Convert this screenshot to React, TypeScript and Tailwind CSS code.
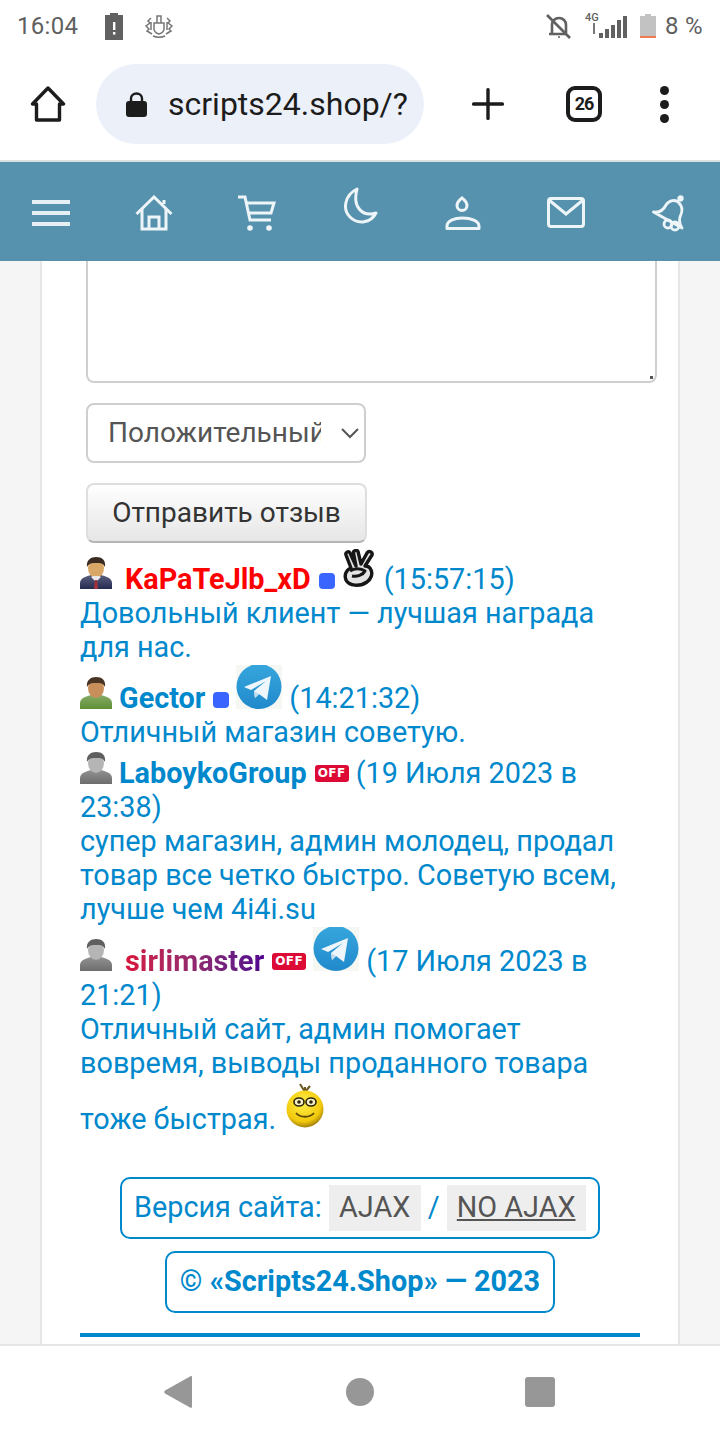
import React from "react";

const Avatar = ({ skin, hair, body, tie, id }: { skin: string; hair: string; body: string; tie?: boolean; id: string }) => (
  <svg width="32" height="32" viewBox="0 0 32 32" className="shrink-0">
    <defs>
      <linearGradient id={id} x1="0" y1="0" x2="0" y2="1">
        <stop offset="0" stopColor={body} stopOpacity="0.75" />
        <stop offset="1" stopColor={body} />
      </linearGradient>
    </defs>
    <path d="M0 32V26C0 21 7 19 11 18H21C25 19 32 21 32 26V32Z" fill={`url(#${id})`} />
    <ellipse cx="16" cy="11" rx="8" ry="10" fill={skin} />
    <path d="M7 10C6 3 11 0 16 0C22 0 26 3 25 10C23 6 21 6 16 6C12 6 9 6 7 10Z" fill={hair} />
    {tie && (
      <>
        <path d="M11 20L16 25L21 20L19 19H13Z" fill="#e8e8e8" />
        <path d="M15 23H17L18 32H14Z" fill="#a8323a" />
      </>
    )}
  </svg>
);

const Telegram = ({ cls, id }: { cls: string; id: string }) => (
  <svg width="46" height="44" viewBox="0 0 46 44" className={`shrink-0 ${cls}`}>
    <rect width="46" height="44" fill="#f4f7f2" />
    <defs>
      <linearGradient id={id} x1="0" y1="0" x2="0" y2="1">
        <stop offset="0" stopColor="#37a6dc" />
        <stop offset="1" stopColor="#2089cc" />
      </linearGradient>
    </defs>
    <circle cx="23" cy="21.5" r="22.5" fill={`url(#${id})`} />
    <path d="M8 22L35 11L31 35L23 29L19 33L18 26L30 16L15 25Z" fill="#eef6fb" />
    <path d="M18 26L19 33L23 29Z" fill="#c4dcec" />
  </svg>
);

const Dot = () => <span className="w-4 h-4 rounded-[4px] bg-[#3a66ff] shrink-0 ml-2 mt-[4px]" />;

const Off = () => (
  <span className="w-[34px] h-[17px] rounded-[3px] bg-[#dd0a35] text-white text-[12px] leading-[17px] font-bold text-center tracking-[0.5px] shrink-0 ml-2 mt-[1px] font-['DejaVu_Sans',sans-serif]">
    OFF
  </span>
);

const Row = ({ children }: { children: React.ReactNode }) => (
  <div className="flex items-center h-[34px] whitespace-nowrap">{children}</div>
);

const Line = ({ children }: { children: React.ReactNode }) => (
  <div className="h-[34px] whitespace-nowrap">{children}</div>
);

export default function App() {
  return (
    <div className="w-[720px] h-[1440px] overflow-hidden flex flex-col bg-white font-['Roboto',sans-serif] text-[28.8px] leading-[34px] text-[#0088cc]">
      {/* status bar */}
      <div className="h-[52px] shrink-0 flex items-center pl-[17px] pr-[17px] text-[#5f5f5f]">
        <span className="text-[24px] leading-[28px] w-[60px] tracking-[0.3px]">16:04</span>
        <svg width="18" height="27" viewBox="0 0 18 27" className="ml-[28px]">
          <path d="M5 0H13V2H18V27H0V2H5Z" fill="#616161" />
          <rect x="8" y="9" width="2.4" height="8" fill="#fff" />
          <rect x="8" y="19" width="2.4" height="2.6" fill="#fff" />
        </svg>
        <svg width="28" height="24" viewBox="0 0 28 24" className="ml-[22px]" fill="none" stroke="#777" strokeWidth="1.5">
          <path d="M9 9H19V15C19 18 17 19 14 20C11 19 9 18 9 15Z" />
          <path d="M12 9V2H16V9" />
          <path d="M8 22C11 23.5 17 23.5 20 22" />
          <path d="M6 4L3 7L5 9L1 12L4 15L2 17L7 20M6 8V16" />
          <path d="M22 4L25 7L23 9L27 12L24 15L26 17L21 20M22 8V16" />
        </svg>
        <span className="flex-1" />
        <svg width="26" height="25" viewBox="0 0 26 25" fill="none" stroke="#616161" strokeWidth="2.6">
          <path d="M6 19V11C6 7 9 4 13 4C17 4 20 7 20 11V19M3 20H21" />
          <path d="M1 1L24 24" />
          <circle cx="13" cy="23" r="1" fill="#616161" stroke="none" />
        </svg>
        <span className="ml-[13px] w-[13px] h-[24px] flex flex-col text-[11px] leading-[11px] mt-[-4px] font-medium">
          <span>4G</span>
          <span className="ml-[8px] w-[2px] h-[11px] bg-[#777]" />
        </span>
        <svg width="29" height="22" viewBox="0 0 29 22" className="ml-[1px] mt-[2px]" fill="#616161">
          <rect x="0" y="17" width="4" height="5" />
          <rect x="6" y="13" width="4" height="9" />
          <rect x="12" y="9" width="4" height="13" />
          <rect x="18" y="4" width="4" height="18" />
          <rect x="24" y="0" width="4" height="22" />
        </svg>
        <svg width="16" height="24" viewBox="0 0 16 24" className="ml-[12px]">
          <path d="M5 0H11V2H16V24H0V2H5Z" fill="#c2c2c2" />
          <rect y="22" width="16" height="2" fill="#f07a50" />
        </svg>
        <span className="ml-[9px] text-[24px] leading-[28px] tracking-[0.3px]">8 %</span>
      </div>

      {/* browser bar */}
      <div className="h-[110px] shrink-0 border-b-2 border-[#d9e1e1] flex items-center text-[#1c1c1c] pb-[4px]">
        <svg width="36" height="36" viewBox="0 0 36 36" fill="none" stroke="#1c1c1c" strokeWidth="3.4" className="ml-[30px]">
          <path d="M18 2L33.5 18H29.5V34H6.5V18H2.5Z" strokeLinejoin="round" />
        </svg>
        <div className="ml-[30px] w-[328px] h-[80px] rounded-[40px] bg-[#ecf0f9] flex items-center pl-[30px]">
          <svg width="21" height="25" viewBox="0 0 21 25">
            <path d="M5 10V6.5C5 3.5 7.5 1.5 10.5 1.5C13.5 1.5 16 3.5 16 6.5V10" fill="none" stroke="#1c1c1c" strokeWidth="2.4" />
            <rect y="9" width="21" height="16" rx="3" fill="#1c1c1c" />
          </svg>
          <span className="ml-[21px] text-[32px] leading-[40px]">scripts24.shop/?</span>
        </div>
        <svg width="32" height="32" viewBox="0 0 32 32" className="ml-[48px]" fill="#1c1c1c">
          <rect x="14.3" y="0" width="3.4" height="32" rx="1.5" />
          <rect x="0" y="14.3" width="32" height="3.4" rx="1.5" />
        </svg>
        <div className="ml-[62px] w-[36px] h-[36px] rounded-[9px] border-[4px] border-[#1c1c1c] flex items-center justify-center text-[18px] leading-none font-bold tracking-[-1px]">
          26
        </div>
        <div className="ml-[58px] flex flex-col gap-[5px]">
          <span className="w-[9px] h-[9px] rounded-full bg-[#1c1c1c]" />
          <span className="w-[9px] h-[9px] rounded-full bg-[#1c1c1c]" />
          <span className="w-[9px] h-[9px] rounded-full bg-[#1c1c1c]" />
        </div>
      </div>

      {/* site nav */}
      <div className="h-[99px] shrink-0 bg-[#5692ad] grid grid-cols-7 items-center justify-items-center">
        <div className="flex flex-col gap-[7px] mt-[3px]">
          <span className="w-[38px] h-[4px] bg-[#e6f0f4]" />
          <span className="w-[38px] h-[4px] bg-[#e6f0f4]" />
          <span className="w-[38px] h-[4px] bg-[#e6f0f4]" />
        </div>
        <svg width="38" height="36" viewBox="0 0 38 36" fill="none" stroke="#eef5f8" strokeWidth="3" className="mt-[3px]">
          <path d="M1.5 19L19 2L36.5 19M29 9V5" />
          <path d="M7 14V34H31V14M14 34V22H24V34" />
        </svg>
        <svg width="38" height="37" viewBox="0 0 38 37" fill="none" stroke="#eef5f8" strokeWidth="3" className="mt-[3px]">
          <path d="M0 2H7L12 25H33" />
          <path d="M8 8H36L33 18H11" />
          <circle cx="12" cy="33" r="2.8" fill="#eef5f8" stroke="none" />
          <circle cx="31" cy="33" r="2.8" fill="#eef5f8" stroke="none" />
        </svg>
        <svg width="36" height="37" viewBox="0 0 36 37" fill="none" stroke="#eef5f8" strokeWidth="3" className="mt-[-12px]">
          <path d="M15 2C3 8 0 22 8 30C16 38 29 36 34 26C21 30 10 21 15 2Z" strokeLinejoin="round" />
        </svg>
        <svg width="36" height="35" viewBox="0 0 36 35" fill="none" stroke="#eef5f8" strokeWidth="3" className="mt-[3px]">
          <path d="M17 2C15 4 12 5.5 12 9.5C12 12.5 14.5 14.5 17 14.5C19.5 14.5 22 12.5 22 9.5C22 5.5 19 4 17 2Z" />
          <path d="M2 32.5V30C2 25 9 22 17.5 22C26 22 34 25 34 30V32.5Z" strokeLinejoin="round" />
        </svg>
        <svg width="38" height="31" viewBox="0 0 38 31" fill="none" stroke="#eef5f8" strokeWidth="3" className="mt-[2px]">
          <rect x="1.5" y="1.5" width="35" height="28" rx="2.5" />
          <path d="M2 3L19 17L36 3" />
        </svg>
        <svg width="34" height="37" viewBox="0 0 34 37" fill="none" stroke="#eef5f8" strokeWidth="2.8" className="mt-[3px]">
          <path d="M1.5 17C8 18 12 14 14 10C17 5 24 4 27 8C31 12 30 18 28 22C27 26 28 30 30 33Z" strokeLinejoin="round" />
          <circle cx="28.5" cy="3.5" r="1.8" fill="#eef5f8" />
          <circle cx="16" cy="29" r="4" />
          <circle cx="23" cy="31" r="4" />
        </svg>
      </div>

      {/* page */}
      <div className="flex-1 min-h-0 bg-[#f5f5f5] pl-[40px]">
        <div className="w-[640px] h-full bg-white border-x-2 border-[#e6e6e6] pl-[38px] pr-[38px] flex flex-col">
          <div className="shrink-0 ml-[6px] w-[571px] h-[122px] border-2 border-t-0 border-[#cfcfcf] rounded-b-[8px] bg-white flex justify-end items-end pr-[2px] pb-[2px]">
            <span className="w-[3px] h-[3px] bg-[#555]" />
          </div>
          <div className="ml-[6px] mt-[20px] w-[280px] h-[60px] shrink-0 border-2 border-[#cfcfcf] rounded-[8px] flex items-center text-[#555] text-[28px]">
            <span className="ml-[20px] w-[213px] overflow-hidden whitespace-nowrap">Положительный</span>
            <svg width="18" height="11" viewBox="0 0 18 11" fill="none" stroke="#555" strokeWidth="2" className="ml-[20px] shrink-0">
              <path d="M1 1L9 9L17 1" />
            </svg>
          </div>
          <div className="ml-[6px] mt-[20px] w-[281px] h-[60px] shrink-0 border-2 border-[#dedede] border-b-[#b5b5b5] rounded-[8px] bg-gradient-to-b from-white to-[#e6e6e6] flex items-center justify-center text-[#333] text-[28px]">
            Отправить отзыв
          </div>

          <div className="mt-[19px]">
            <Row>
              <span className="-mt-[12px] shrink-0 flex"><Avatar id="a1" skin="#d9a766" hair="#3a2c22" body="#252a52" tie /></span>
              <span className="ml-[13px] font-bold text-[#ff0000]">KaPaTeJlb_xD</span>
              <Dot />
              <svg width="32" height="38" viewBox="0 0 32 38" className="shrink-0 ml-[8px] -mt-[23px]" fill="#e4e4e4" stroke="#161616" strokeWidth="3.4" strokeLinejoin="round">
                <path d="M13 17L7 4C6 1.5 2 3 3 6L8 19C3 21 1 26 3 31C6 37 17 38 24 33C28 30 30 25 28 21C27 18 25 17 22 17L29 6C30 3 26 1 24 4L18 15L15 2.5C14 .5 10 1.5 10.5 4L13 17Z" />
                <path d="M7 22C11 19 18 19 22 22C20 26 14 28 9 27" fill="none" strokeWidth="3" />
              </svg>
              <span className="ml-[9px]">(15:57:15)</span>
            </Row>
            <Line>Довольный клиент — лучшая награда</Line>
            <Line>для нас.</Line>
          </div>

          <div className="mt-[17px]">
            <Row>
              <span className="-mt-[10px] shrink-0 flex"><Avatar id="a2" skin="#c98f5a" hair="#4a3424" body="#5e8f35" /></span>
              <span className="ml-[7px] font-bold">Gector</span>
              <Dot />
              <Telegram id="tg1" cls="ml-[7px] -mt-[22px]" />
              <span className="ml-[7px]">(14:21:32)</span>
            </Row>
            <Line>Отличный магазин советую.</Line>
          </div>

          <div className="mt-[7px]">
            <Row>
              <span className="-mt-[10px] shrink-0 flex"><Avatar id="a3" skin="#b5b5b5" hair="#5f5f5f" body="#6d6d6d" /></span>
              <span className="ml-[7px] font-bold">LaboykoGroup</span>
              <Off />
              <span className="ml-[7px]">(19 Июля 2023 в</span>
            </Row>
            <Line>23:38)</Line>
            <Line>супер магазин, админ молодец, продал</Line>
            <Line>товар все четко быстро. Советую всем,</Line>
            <Line>лучше чем 4i4i.su</Line>
          </div>

          <div className="mt-[18px]">
            <Row>
              <span className="-mt-[12px] shrink-0 flex"><Avatar id="a4" skin="#b5b5b5" hair="#5f5f5f" body="#6d6d6d" /></span>
              <span className="ml-[13px] font-bold bg-gradient-to-r from-[#d9103a] to-[#52008f] bg-clip-text text-transparent">sirlimaster</span>
              <Off />
              <Telegram id="tg2" cls="ml-[7px] -mt-[24px]" />
              <span className="ml-[7px]">(17 Июля 2023 в</span>
            </Row>
            <Line>21:21)</Line>
            <Line>Отличный сайт, админ помогает</Line>
            <Line>вовремя, выводы проданного товара</Line>
          </div>

          <div className="mt-[22px]">
            <Row>
              <span>тоже быстрая.</span>
              <svg width="38" height="45" viewBox="0 0 38 45" className="shrink-0 ml-[10px] -mt-[28px]">
                <defs>
                  <radialGradient id="sm" cx="0.45" cy="0.35" r="0.7">
                    <stop offset="0" stopColor="#fff04a" />
                    <stop offset="0.7" stopColor="#f2c90c" />
                    <stop offset="1" stopColor="#8a6a08" />
                  </radialGradient>
                </defs>
                <path d="M19 9L14 1M19 9L24 3M19 9V4" stroke="#6b5520" strokeWidth="2" />
                <circle cx="19" cy="26" r="18.5" fill="url(#sm)" />
                <ellipse cx="13" cy="19" rx="5" ry="4" fill="#f6f0c8" stroke="#2c2408" strokeWidth="1.6" />
                <ellipse cx="25" cy="19" rx="5" ry="4" fill="#f6f0c8" stroke="#2c2408" strokeWidth="1.6" />
                <circle cx="13" cy="19" r="1.8" fill="#2c2408" />
                <circle cx="25" cy="19" r="1.8" fill="#2c2408" />
                <path d="M10 30C14 35 24 35 28 30" fill="none" stroke="#5b4808" strokeWidth="1.8" />
              </svg>
            </Row>
          </div>

          <div className="mt-[41px] self-center flex flex-col items-center gap-[12px]">
            <div className="w-[480px] h-[62px] border-2 border-[#0088cc] rounded-[10px] flex items-center pl-[12px]">
              <span className="pb-[2px]">Версия сайта:</span>
              <span className="ml-[7px] h-[46px] w-[92px] bg-[#eeeeee] text-[#555] flex items-center justify-center pb-[2px]">AJAX</span>
              <span className="w-[26px] text-center pb-[2px]">/</span>
              <span className="h-[46px] w-[139px] bg-[#eeeeee] text-[#555] flex items-center justify-center underline pb-[2px]">NO AJAX</span>
            </div>
            <div className="w-[390px] h-[62px] border-2 border-[#0088cc] rounded-[10px] flex items-center justify-center font-bold pb-[2px]">
              © «Scripts24.Shop» — 2023
            </div>
          </div>
          <div className="mt-[20px] h-[4px] w-[560px] shrink-0 bg-[#0088cc]" />
        </div>
      </div>

      {/* android nav */}
      <div className="h-[96px] shrink-0 border-t-2 border-[#e6e6e6] bg-white flex items-center pb-[2px] pl-[164px]">
        <svg width="28" height="32" viewBox="0 0 28 32" fill="#979797">
          <path d="M28 1.5V30.5C28 32 27 32.3 26 31.5L1 17.5C0 16.7 0 15.3 1 14.5L26 .5C27 -.3 28 0 28 1.5Z" />
        </svg>
        <span className="ml-[154px] w-7 h-7 rounded-full bg-[#979797]" />
        <span className="ml-[151px] w-[30px] h-[30px] rounded-[3px] bg-[#979797]" />
      </div>
    </div>
  );
}
